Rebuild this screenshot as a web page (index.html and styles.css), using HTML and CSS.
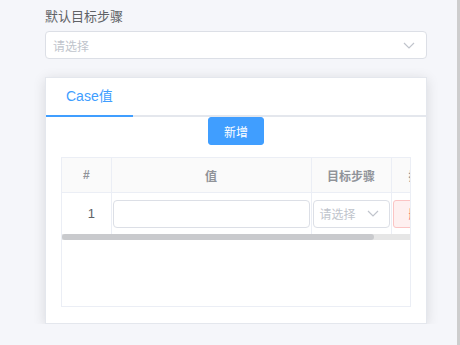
FILE: index.html
```html
<!DOCTYPE html>
<html lang="zh-CN">
<head>
    <meta charset="UTF-8">
    <title>Case值</title>
    <link rel="stylesheet" href="styles.css">
</head>
<body>
    <div class="page">
        <div class="form-label">默认目标步骤</div>
        <div class="select">
            <span class="placeholder">请选择</span>
            <svg class="arrow" width="12" height="7" viewBox="0 0 12 7"><path d="M1 1l5 5 5-5" fill="none" stroke="#c0c4cc" stroke-width="1.2"/></svg>
        </div>

        <div class="card">
            <div class="tabs">
                <div class="tab active">Case值</div>
            </div>
            <div class="card-body">
                <div class="toolbar">
                    <button class="btn btn-primary">新增</button>
                </div>
                <div class="table-box">
                    <div class="table-scroll">
                        <table>
                            <colgroup>
                                <col style="width:49px">
                                <col style="width:200px">
                                <col style="width:80px">
                                <col style="width:59px">
                            </colgroup>
                            <thead>
                                <tr><th>#</th><th>值</th><th>目标步骤</th><th>操作</th></tr>
                            </thead>
                            <tbody>
                                <tr>
                                    <td class="idx">1</td>
                                    <td class="cell-edit"><div class="input"></div></td>
                                    <td class="cell-edit">
                                        <div class="select select-mini">
                                            <span class="placeholder">请选择</span>
                                            <svg class="arrow" width="12" height="7" viewBox="0 0 12 7"><path d="M1 1l5 5 5-5" fill="none" stroke="#c0c4cc" stroke-width="1.2"/></svg>
                                        </div>
                                    </td>
                                    <td class="cell-edit"><button class="btn btn-danger">删除</button></td>
                                </tr>
                            </tbody>
                        </table>
                    </div>
                    <div class="hscroll"><div class="hscroll-thumb"></div></div>
                </div>
            </div>
        </div>
    </div>
    <div class="page-scrollbar"></div>
</body>
</html>
```

FILE: styles.css
```css
body {
    margin: 0;
    background: #f5f6fa;
    font-family: "Liberation Sans", "Noto Sans CJK SC", sans-serif;
    color: #606266;
}

.page {
    width: 382px;
    margin-left: 45px;
    padding-top: 6px;
}

.form-label {
    font-size: 13px;
    line-height: 22px;
    color: #606266;
}

.select {
    margin-top: 3px;
    height: 28px;
    box-sizing: border-box;
    border: 1px solid #dcdfe6;
    border-radius: 4px;
    background: #fff;
    display: flex;
    align-items: center;
    justify-content: space-between;
    padding: 0 11px 0 7px;
}

.placeholder {
    font-size: 12px;
    color: #c0c4cc;
}

.card {
    margin-top: 18px;
    background: #fff;
    border: 1px solid #e4e7ed;
    box-shadow: 0 2px 12px 0 rgba(0, 0, 0, 0.12);
    padding-bottom: 16px;
}

.tabs {
    display: flex;
    border-bottom: 2px solid #e4e7ed;
    height: 37px;
}

.tab {
    padding: 0 20px;
    line-height: 37px;
    font-size: 14px;
    color: #303133;
    margin-bottom: -2px;
}

.tab.active {
    color: #409eff;
    border-bottom: 2px solid #409eff;
}

.card-body {
    padding: 0 15px;
}

.toolbar {
    display: flex;
    justify-content: center;
    margin-bottom: 12px;
}

.btn {
    height: 28px;
    padding: 0 15px;
    font-size: 12px;
    border-radius: 3px;
    font-family: inherit;
    border: 1px solid transparent;
}

.btn-primary {
    background: #409eff;
    border-color: #409eff;
    color: #fff;
}

.btn-danger {
    background: #fef0f0;
    border-color: #fbc4c4;
    color: #f56c6c;
}

.table-box {
    height: 150px;
    box-sizing: border-box;
    border: 1px solid #ebeef5;
}

.table-scroll {
    overflow: hidden;
}

.hscroll {
    height: 6px;
    background: #e6e6e6;
}

.hscroll-thumb {
    width: 312px;
    height: 6px;
    background: #c9cacd;
    border-radius: 3px;
}

table {
    table-layout: fixed;
    width: 388px;
    border-collapse: collapse;
    font-size: 12px;
}

th {
    height: 34px;
    padding: 0;
    background: #fafafa;
    color: #909399;
    font-weight: bold;
    text-align: center;
    border-right: 1px solid #ebeef5;
    border-bottom: 1px solid #ebeef5;
    white-space: nowrap;
    overflow: hidden;
}

td {
    height: 41px;
    border-right: 1px solid #ebeef5;
    padding: 0;
    white-space: nowrap;
    overflow: hidden;
}

td.idx {
    text-align: center;
    padding-left: 10px;
    color: #606266;
    font-size: 13px;
}

td.cell-edit {
    padding: 0 1px;
}

.input {
    height: 28px;
    box-sizing: border-box;
    border: 1px solid #dcdfe6;
    border-radius: 4px;
    background: #fff;
}

.select-mini {
    margin-top: 0;
    padding: 0 10px 0 6px;
}

.page-scrollbar {
    position: fixed;
    top: 0;
    right: 0;
    width: 3px;
    height: 100%;
    background: #cdcdcd;
}
```
